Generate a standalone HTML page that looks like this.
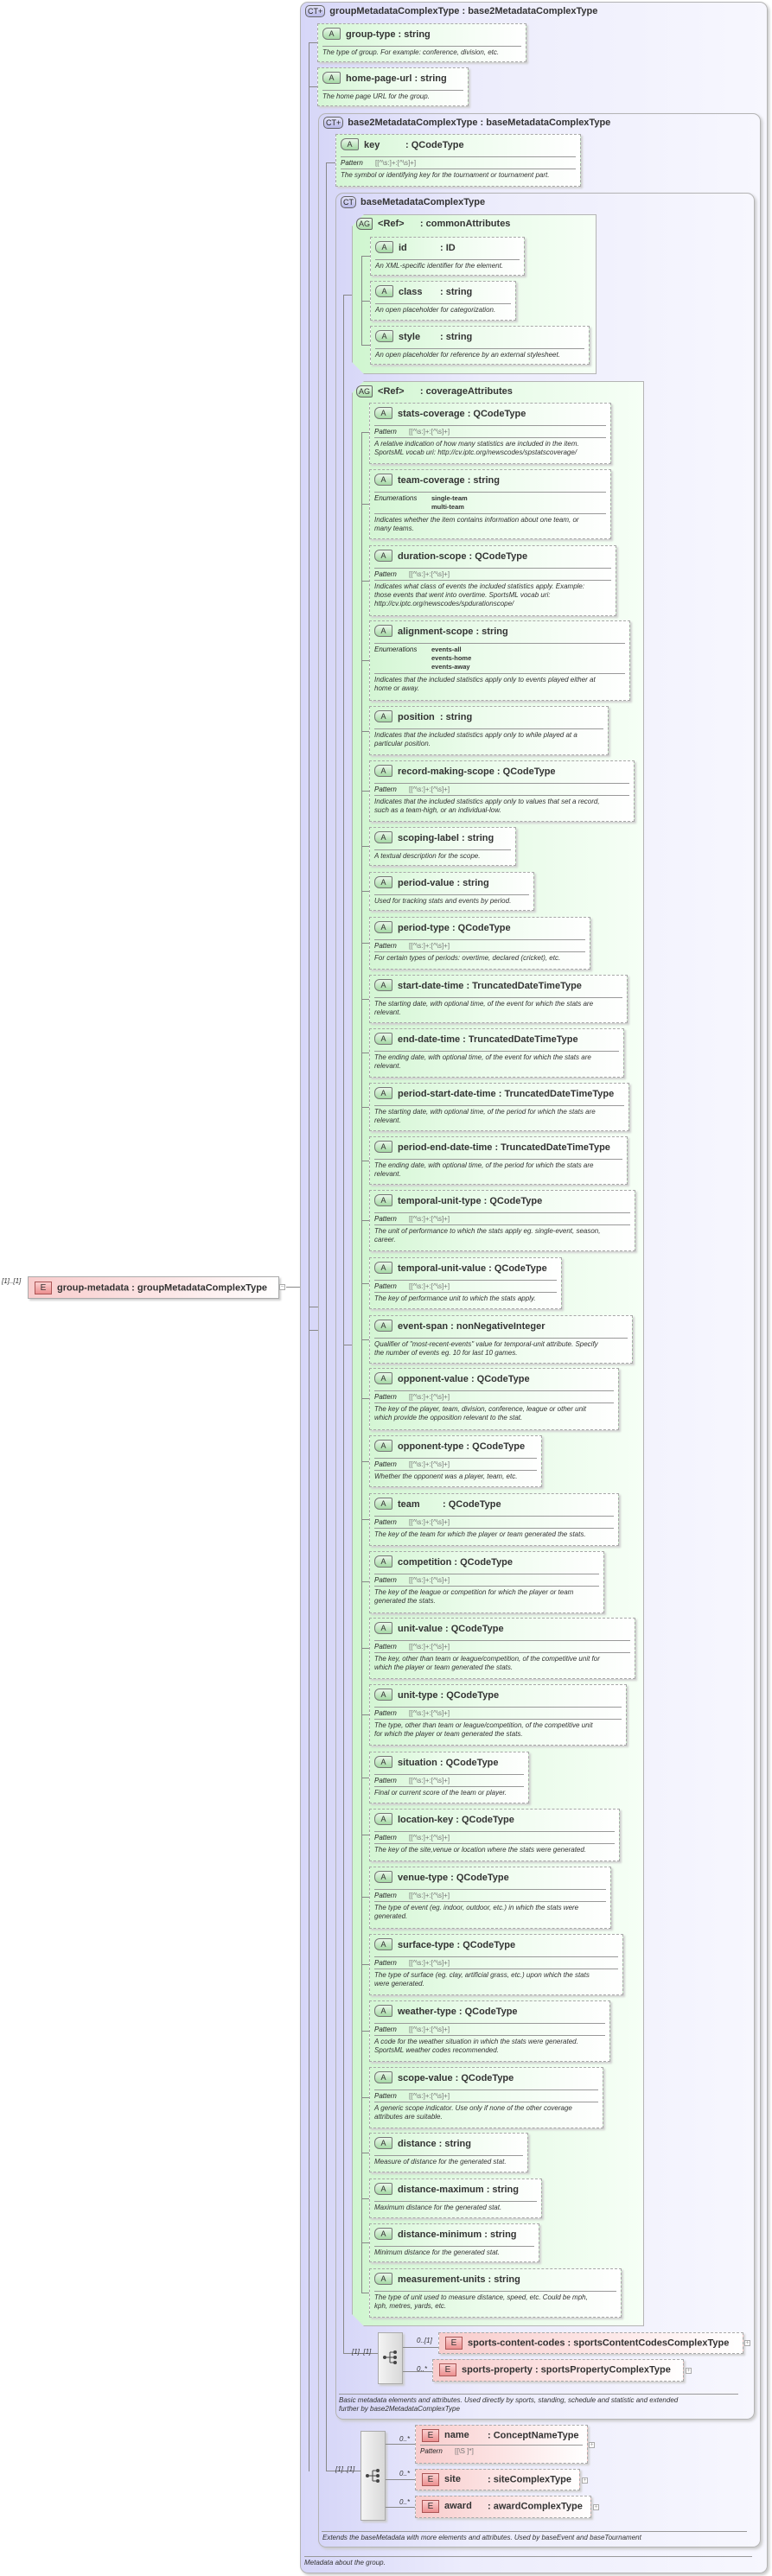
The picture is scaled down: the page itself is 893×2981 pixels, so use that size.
<!DOCTYPE html>
<html><head><meta charset="utf-8">
<style>
*{box-sizing:border-box;margin:0;padding:0}
body{width:893px;height:2981px;background:#fff;position:relative;font-family:"Liberation Sans",sans-serif;color:#333;overflow:hidden}
.ct{position:absolute;border:1px solid #b4b4b4;border-radius:9px;background:linear-gradient(to right,#d6d6f8 0,#ececfc 35%,#f7f7fe 100%);box-shadow:2px 2px 3px #c8c8c8}
.ctt{position:absolute;font-size:11px;font-weight:bold;white-space:nowrap;color:#333}
.cti{display:inline-block;vertical-align:middle;border:1px solid #666;border-radius:5px;background:linear-gradient(#e4e4fa,#b8b8e8);font-size:9px;font-weight:normal;padding:0 2px;height:14px;line-height:12px;margin-right:5px;color:#222}
.ag{position:absolute;border:1px solid #b4b4b4;background:linear-gradient(to right,#cff5cf 0,#e8fbe8 50%,#f6fff6 100%);box-shadow:2px 2px 3px #c4c4c4;clip-path:polygon(14px 0,100% 0,100% 100%,14px 100%,0 calc(100% - 14px),0 14px)}
.agi{display:inline-block;vertical-align:middle;border:1px solid #666;border-radius:6px 2px 2px 6px;background:linear-gradient(#e8f8e8,#a8dca8);font-size:9px;padding:0 2px;height:14px;line-height:12px;margin-right:6px;font-weight:normal}
.a{position:absolute;border:1px dashed #a8a8a8;background:linear-gradient(to right,#d4f6d4 0,#ecfcec 45%,#fff 100%);box-shadow:2px 2px 2px #d0d0d0}
.h{height:25px;padding:6px 0 0 5px;font-size:11px;font-weight:bold;white-space:nowrap}
.ai{display:inline-block;vertical-align:middle;width:21px;height:14px;border:1px solid #777;border-radius:6px 2px 2px 6px;background:linear-gradient(#eaf8ea,#a4d8a4);font-size:9px;font-weight:normal;text-align:center;line-height:12px;margin-right:6px;margin-top:-2px}
.s{border-top:1px solid #999;margin:0 5px}
.p{height:13px;font-size:8px;padding:2px 0 0 5px;white-space:nowrap}
.p i{display:inline-block;width:40px;color:#222}
.p b{font-weight:normal;color:#777}
.en{font-size:8px;padding:2px 0 2px 5px;display:flex}
.en i{width:66px;color:#222}
.en div{font-weight:bold;line-height:10px;font-size:7.5px}
.d{font-size:8px;font-style:italic;line-height:10px;padding:2px 5px;white-space:nowrap;color:#333}
.e{position:absolute;border:1px dashed #aaa;background:linear-gradient(to right,#f8cccc 0,#fce4e4 50%,#fff 100%);box-shadow:2px 2px 2px #d0d0d0}
.e.sol{border-style:solid}
.ei{display:inline-block;vertical-align:middle;width:20px;height:15px;border:1px solid #a55;background:linear-gradient(#fbd0d0,#ec9090);font-size:10px;text-align:center;line-height:13px;margin-right:6px;font-weight:normal}
.eh{padding:5px 0 0 7px;font-size:11px;font-weight:bold;white-space:nowrap}
.lb{position:absolute;font-size:8px;font-style:italic;white-space:nowrap}
.pl{position:absolute;width:7px;height:7px;border:1px solid #aaa;background:#fff;font-size:7px;line-height:5px;text-align:center;color:#999}
.ln{position:absolute;background:#888}
.sq{position:absolute;border:1px solid #aaa;background:linear-gradient(to right,#f4f4f4,#d8d8d8);box-shadow:2px 2px 2px #ccc}
.ds{position:absolute;font-size:8px;font-style:italic;line-height:10px;white-space:nowrap}
.dl{position:absolute;border-top:1px solid #999}
.w{display:inline-block}
</style></head><body>

<!-- root element -->
<div class="lb" style="left:2px;top:1478px">[1]..[1]</div>
<div class="e sol" style="left:32px;top:1477px;width:291px;height:26px"><div class="eh"><span class="ei">E</span>group-metadata : groupMetadataComplexType</div></div>
<div class="pl" style="left:323px;top:1486px">−</div>
<div class="ln" style="left:331px;top:1489px;width:26px;height:1px"></div>

<!-- outer CT -->
<div class="ct" style="left:347px;top:2px;width:541px;height:2976px"></div>
<div class="ctt" style="left:353px;top:6px"><span class="cti">CT+</span>groupMetadataComplexType : base2MetadataComplexType</div>

<div class="ln" style="left:357px;top:49px;width:1px;height:2811px"></div>
<div class="ln" style="left:357px;top:49px;width:10px;height:1px"></div>
<div class="ln" style="left:357px;top:100px;width:10px;height:1px"></div>
<div class="ln" style="left:357px;top:1512px;width:40px;height:1px"></div>
<div class="ln" style="left:357px;top:1539px;width:20px;height:1px"></div>

<div class="a" style="left:367px;top:27px;width:242px;height:45px"><div class="h"><span class="ai">A</span>group-type : string</div><div class="s"></div><div class="d">The type of group. For example: conference, division, etc.</div></div>
<div class="a" style="left:367px;top:78px;width:175px;height:45px"><div class="h"><span class="ai">A</span>home-page-url : string</div><div class="s"></div><div class="d">The home page URL for the group.</div></div>

<!-- base2 CT -->
<div class="ct" style="left:368px;top:131px;width:512px;height:2817px"></div>
<div class="ctt" style="left:374px;top:135px"><span class="cti">CT+</span>base2MetadataComplexType : baseMetadataComplexType</div>
<div class="ln" style="left:377px;top:188px;width:1px;height:2672px"></div>
<div class="ln" style="left:377px;top:188px;width:11px;height:1px"></div>
<div class="ln" style="left:377px;top:2859px;width:40px;height:1px"></div>

<div class="a" style="left:388px;top:155px;width:284px;height:61px"><div class="h"><span class="ai">A</span><span class="w" style="width:48px">key</span>: QCodeType</div><div class="s"></div><div class="p"><i>Pattern</i><b>[[^\s:]+:[^\s]+]</b></div><div class="s"></div><div class="d">The symbol or identifying key for the tournament or tournament part.</div></div>

<!-- base CT -->
<div class="ct" style="left:388px;top:223px;width:485px;height:2577px"></div>
<div class="ctt" style="left:394px;top:227px"><span class="cti">CT</span>baseMetadataComplexType</div>
<div class="ln" style="left:397px;top:341px;width:1px;height:2383px"></div>
<div class="ln" style="left:397px;top:341px;width:11px;height:1px"></div>
<div class="ln" style="left:397px;top:1556px;width:10px;height:1px"></div>
<div class="ln" style="left:397px;top:2723px;width:40px;height:1px"></div>

<!-- commonAttributes -->
<div class="ag" style="left:407px;top:248px;width:283px;height:185px"></div>
<div class="ctt" style="left:412px;top:252px"><span class="agi">AG</span>&lt;Ref&gt;&nbsp;&nbsp;&nbsp;&nbsp;&nbsp; : commonAttributes</div>
<div class="ln" style="left:418px;top:296px;width:1px;height:104px"></div>
<div class="ln" style="left:418px;top:296px;width:10px;height:1px"></div>
<div class="ln" style="left:418px;top:348px;width:10px;height:1px"></div>
<div class="ln" style="left:418px;top:399px;width:10px;height:1px"></div>
<div class="a" style="left:428px;top:274px;width:179px;height:45px"><div class="h"><span class="ai">A</span><span class="w" style="width:48px">id</span>: ID</div><div class="s"></div><div class="d">An XML-specific identifier for the element.</div></div>
<div class="a" style="left:428px;top:325px;width:169px;height:46px"><div class="h"><span class="ai">A</span><span class="w" style="width:48px">class</span>: string</div><div class="s"></div><div class="d">An open placeholder for categorization.</div></div>
<div class="a" style="left:428px;top:377px;width:254px;height:45px"><div class="h"><span class="ai">A</span><span class="w" style="width:48px">style</span>: string</div><div class="s"></div><div class="d">An open placeholder for reference by an external stylesheet.</div></div>

<!-- coverageAttributes -->
<div class="ag" style="left:407px;top:441px;width:338px;height:2251px"></div>
<div class="ctt" style="left:412px;top:446px"><span class="agi">AG</span>&lt;Ref&gt;&nbsp;&nbsp;&nbsp;&nbsp;&nbsp; : coverageAttributes</div>
<div class="ln" style="left:418px;top:500px;width:1px;height:2154px"></div>

<div class="a" style="left:427px;top:466px;width:280px;height:71px"><div class="h"><span class="ai">A</span>stats-coverage : QCodeType</div><div class="s"></div><div class="p"><i>Pattern</i><b>[[^\s:]+:[^\s]+]</b></div><div class="s"></div><div class="d">A relative indication of how many statistics are included in the item.<br>SportsML vocab uri: http://cv.iptc.org/newscodes/spstatscoverage/</div></div>
<div class="a" style="left:427px;top:543px;width:280px;height:81px"><div class="h"><span class="ai">A</span>team-coverage : string</div><div class="s"></div><div class="en"><i>Enumerations</i><div>single-team<br>multi-team</div></div><div class="s"></div><div class="d">Indicates whether the item contains information about one team, or<br>many teams.</div></div>
<div class="a" style="left:427px;top:631px;width:286px;height:82px"><div class="h"><span class="ai">A</span>duration-scope : QCodeType</div><div class="s"></div><div class="p"><i>Pattern</i><b>[[^\s:]+:[^\s]+]</b></div><div class="s"></div><div class="d">Indicates what class of events the included statistics apply. Example:<br>those events that went into overtime. SportsML vocab uri:<br>http://cv.iptc.org/newscodes/spdurationscope/</div></div>
<div class="a" style="left:427px;top:718px;width:302px;height:93px"><div class="h"><span class="ai">A</span>alignment-scope : string</div><div class="s"></div><div class="en"><i>Enumerations</i><div>events-all<br>events-home<br>events-away</div></div><div class="s"></div><div class="d">Indicates that the included statistics apply only to events played either at<br>home or away.</div></div>
<div class="a" style="left:427px;top:817px;width:277px;height:57px"><div class="h"><span class="ai">A</span>position&nbsp; : string</div><div class="s"></div><div class="d">Indicates that the included statistics apply only to while played at a<br>particular position.</div></div>
<div class="a" style="left:427px;top:880px;width:307px;height:71px"><div class="h"><span class="ai">A</span>record-making-scope : QCodeType</div><div class="s"></div><div class="p"><i>Pattern</i><b>[[^\s:]+:[^\s]+]</b></div><div class="s"></div><div class="d">Indicates that the included statistics apply only to values that set a record,<br>such as a team-high, or an individual-low.</div></div>
<div class="a" style="left:427px;top:957px;width:170px;height:45px"><div class="h"><span class="ai">A</span>scoping-label : string</div><div class="s"></div><div class="d">A textual description for the scope.</div></div>
<div class="a" style="left:427px;top:1009px;width:191px;height:45px"><div class="h"><span class="ai">A</span>period-value : string</div><div class="s"></div><div class="d">Used for tracking stats and events by period.</div></div>
<div class="a" style="left:427px;top:1061px;width:256px;height:61px"><div class="h"><span class="ai">A</span>period-type : QCodeType</div><div class="s"></div><div class="p"><i>Pattern</i><b>[[^\s:]+:[^\s]+]</b></div><div class="s"></div><div class="d">For certain types of periods: overtime, declared (cricket), etc.</div></div>
<div class="a" style="left:427px;top:1128px;width:299px;height:56px"><div class="h"><span class="ai">A</span>start-date-time : TruncatedDateTimeType</div><div class="s"></div><div class="d">The starting date, with optional time, of the event for which the stats are<br>relevant.</div></div>
<div class="a" style="left:427px;top:1190px;width:295px;height:57px"><div class="h"><span class="ai">A</span>end-date-time : TruncatedDateTimeType</div><div class="s"></div><div class="d">The ending date, with optional time, of the event for which the stats are<br>relevant.</div></div>
<div class="a" style="left:427px;top:1253px;width:301px;height:56px"><div class="h"><span class="ai">A</span>period-start-date-time : TruncatedDateTimeType</div><div class="s"></div><div class="d">The starting date, with optional time, of the period for which the stats are<br>relevant.</div></div>
<div class="a" style="left:427px;top:1315px;width:299px;height:56px"><div class="h"><span class="ai">A</span>period-end-date-time : TruncatedDateTimeType</div><div class="s"></div><div class="d">The ending date, with optional time, of the period for which the stats are<br>relevant.</div></div>
<div class="a" style="left:427px;top:1377px;width:308px;height:71px"><div class="h"><span class="ai">A</span>temporal-unit-type : QCodeType</div><div class="s"></div><div class="p"><i>Pattern</i><b>[[^\s:]+:[^\s]+]</b></div><div class="s"></div><div class="d">The unit of performance to which the stats apply eg. single-event, season,<br>career.</div></div>
<div class="a" style="left:427px;top:1455px;width:223px;height:60px"><div class="h"><span class="ai">A</span>temporal-unit-value : QCodeType</div><div class="s"></div><div class="p"><i>Pattern</i><b>[[^\s:]+:[^\s]+]</b></div><div class="s"></div><div class="d">The key of performance unit to which the stats apply.</div></div>
<div class="a" style="left:427px;top:1522px;width:305px;height:56px"><div class="h"><span class="ai">A</span>event-span : nonNegativeInteger</div><div class="s"></div><div class="d">Qualifier of "most-recent-events" value for temporal-unit attribute. Specify<br>the number of events eg. 10 for last 10 games.</div></div>
<div class="a" style="left:427px;top:1583px;width:289px;height:72px"><div class="h"><span class="ai">A</span>opponent-value : QCodeType</div><div class="s"></div><div class="p"><i>Pattern</i><b>[[^\s:]+:[^\s]+]</b></div><div class="s"></div><div class="d">The key of the player, team, division, conference, league or other unit<br>which provide the opposition relevant to the stat.</div></div>
<div class="a" style="left:427px;top:1661px;width:200px;height:60px"><div class="h"><span class="ai">A</span>opponent-type : QCodeType</div><div class="s"></div><div class="p"><i>Pattern</i><b>[[^\s:]+:[^\s]+]</b></div><div class="s"></div><div class="d">Whether the opponent was a player, team, etc.</div></div>
<div class="a" style="left:427px;top:1728px;width:289px;height:61px"><div class="h"><span class="ai">A</span><span class="w" style="width:52px">team</span>: QCodeType</div><div class="s"></div><div class="p"><i>Pattern</i><b>[[^\s:]+:[^\s]+]</b></div><div class="s"></div><div class="d">The key of the team for which the player or team generated the stats.</div></div>
<div class="a" style="left:427px;top:1795px;width:272px;height:72px"><div class="h"><span class="ai">A</span>competition : QCodeType</div><div class="s"></div><div class="p"><i>Pattern</i><b>[[^\s:]+:[^\s]+]</b></div><div class="s"></div><div class="d">The key of the league or competition for which the player or team<br>generated the stats.</div></div>
<div class="a" style="left:427px;top:1872px;width:308px;height:71px"><div class="h"><span class="ai">A</span>unit-value : QCodeType</div><div class="s"></div><div class="p"><i>Pattern</i><b>[[^\s:]+:[^\s]+]</b></div><div class="s"></div><div class="d">The key, other than team or league/competition, of the competitive unit for<br>which the player or team generated the stats.</div></div>
<div class="a" style="left:427px;top:1949px;width:298px;height:71px"><div class="h"><span class="ai">A</span>unit-type : QCodeType</div><div class="s"></div><div class="p"><i>Pattern</i><b>[[^\s:]+:[^\s]+]</b></div><div class="s"></div><div class="d">The type, other than team or league/competition, of the competitive unit<br>for which the player or team generated the stats.</div></div>
<div class="a" style="left:427px;top:2027px;width:185px;height:60px"><div class="h"><span class="ai">A</span>situation : QCodeType</div><div class="s"></div><div class="p"><i>Pattern</i><b>[[^\s:]+:[^\s]+]</b></div><div class="s"></div><div class="d">Final or current score of the team or player.</div></div>
<div class="a" style="left:427px;top:2093px;width:290px;height:61px"><div class="h"><span class="ai">A</span>location-key : QCodeType</div><div class="s"></div><div class="p"><i>Pattern</i><b>[[^\s:]+:[^\s]+]</b></div><div class="s"></div><div class="d">The key of the site,venue or location where the stats were generated.</div></div>
<div class="a" style="left:427px;top:2160px;width:280px;height:72px"><div class="h"><span class="ai">A</span>venue-type : QCodeType</div><div class="s"></div><div class="p"><i>Pattern</i><b>[[^\s:]+:[^\s]+]</b></div><div class="s"></div><div class="d">The type of event (eg. indoor, outdoor, etc.) in which the stats were<br>generated.</div></div>
<div class="a" style="left:427px;top:2238px;width:294px;height:71px"><div class="h"><span class="ai">A</span>surface-type : QCodeType</div><div class="s"></div><div class="p"><i>Pattern</i><b>[[^\s:]+:[^\s]+]</b></div><div class="s"></div><div class="d">The type of surface (eg. clay, artificial grass, etc.) upon which the stats<br>were generated.</div></div>
<div class="a" style="left:427px;top:2315px;width:279px;height:71px"><div class="h"><span class="ai">A</span>weather-type : QCodeType</div><div class="s"></div><div class="p"><i>Pattern</i><b>[[^\s:]+:[^\s]+]</b></div><div class="s"></div><div class="d">A code for the weather situation in which the stats were generated.<br>SportsML weather codes recommended.</div></div>
<div class="a" style="left:427px;top:2392px;width:271px;height:71px"><div class="h"><span class="ai">A</span>scope-value : QCodeType</div><div class="s"></div><div class="p"><i>Pattern</i><b>[[^\s:]+:[^\s]+]</b></div><div class="s"></div><div class="d">A generic scope indicator. Use only if none of the other coverage<br>attributes are suitable.</div></div>
<div class="a" style="left:427px;top:2468px;width:184px;height:46px"><div class="h"><span class="ai">A</span>distance : string</div><div class="s"></div><div class="d">Measure of distance for the generated stat.</div></div>
<div class="a" style="left:427px;top:2521px;width:200px;height:46px"><div class="h"><span class="ai">A</span>distance-maximum : string</div><div class="s"></div><div class="d">Maximum distance for the generated stat.</div></div>
<div class="a" style="left:427px;top:2573px;width:197px;height:45px"><div class="h"><span class="ai">A</span>distance-minimum : string</div><div class="s"></div><div class="d">Minimum distance for the generated stat.</div></div>
<div class="a" style="left:427px;top:2625px;width:292px;height:57px"><div class="h"><span class="ai">A</span>measurement-units : string</div><div class="s"></div><div class="d">The type of unit used to measure distance, speed, etc. Could be mph,<br>kph, metres, yards, etc.</div></div>

<!-- stubs -->
<div class="ln" style="left:418px;top:500px;width:9px;height:1px"></div>
<div class="ln" style="left:418px;top:583px;width:9px;height:1px"></div>
<div class="ln" style="left:418px;top:672px;width:9px;height:1px"></div>
<div class="ln" style="left:418px;top:764px;width:9px;height:1px"></div>
<div class="ln" style="left:418px;top:846px;width:9px;height:1px"></div>
<div class="ln" style="left:418px;top:915px;width:9px;height:1px"></div>
<div class="ln" style="left:418px;top:979px;width:9px;height:1px"></div>
<div class="ln" style="left:418px;top:1031px;width:9px;height:1px"></div>
<div class="ln" style="left:418px;top:1091px;width:9px;height:1px"></div>
<div class="ln" style="left:418px;top:1156px;width:9px;height:1px"></div>
<div class="ln" style="left:418px;top:1218px;width:9px;height:1px"></div>
<div class="ln" style="left:418px;top:1281px;width:9px;height:1px"></div>
<div class="ln" style="left:418px;top:1343px;width:9px;height:1px"></div>
<div class="ln" style="left:418px;top:1412px;width:9px;height:1px"></div>
<div class="ln" style="left:418px;top:1485px;width:9px;height:1px"></div>
<div class="ln" style="left:418px;top:1550px;width:9px;height:1px"></div>
<div class="ln" style="left:418px;top:1618px;width:9px;height:1px"></div>
<div class="ln" style="left:418px;top:1691px;width:9px;height:1px"></div>
<div class="ln" style="left:418px;top:1758px;width:9px;height:1px"></div>
<div class="ln" style="left:418px;top:1830px;width:9px;height:1px"></div>
<div class="ln" style="left:418px;top:1907px;width:9px;height:1px"></div>
<div class="ln" style="left:418px;top:1984px;width:9px;height:1px"></div>
<div class="ln" style="left:418px;top:2057px;width:9px;height:1px"></div>
<div class="ln" style="left:418px;top:2123px;width:9px;height:1px"></div>
<div class="ln" style="left:418px;top:2195px;width:9px;height:1px"></div>
<div class="ln" style="left:418px;top:2273px;width:9px;height:1px"></div>
<div class="ln" style="left:418px;top:2350px;width:9px;height:1px"></div>
<div class="ln" style="left:418px;top:2427px;width:9px;height:1px"></div>
<div class="ln" style="left:418px;top:2491px;width:9px;height:1px"></div>
<div class="ln" style="left:418px;top:2544px;width:9px;height:1px"></div>
<div class="ln" style="left:418px;top:2595px;width:9px;height:1px"></div>
<div class="ln" style="left:418px;top:2653px;width:9px;height:1px"></div>

<!-- sequence 1 -->
<div class="lb" style="left:407px;top:2717px">[1]..[1]</div>
<div class="sq" style="left:437px;top:2699px;width:29px;height:60px"></div>
<svg style="position:absolute;left:442px;top:2719px" width="20" height="18" viewBox="0 0 20 18"><circle cx="3" cy="9" r="2" fill="#444"/><path d="M5 9H9M9 3V15M9 3H13M9 9H13M9 15H13" stroke="#444" fill="none"/><circle cx="15" cy="3" r="2" fill="#444"/><circle cx="15" cy="9" r="2" fill="#444"/><circle cx="15" cy="15" r="2" fill="#444"/></svg>
<div class="ln" style="left:466px;top:2716px;width:41px;height:1px"></div>
<div class="ln" style="left:466px;top:2744px;width:34px;height:1px"></div>
<div class="lb" style="left:482px;top:2704px">0..[1]</div>
<div class="lb" style="left:482px;top:2737px">0..*</div>
<div class="e" style="left:507px;top:2699px;width:353px;height:25px"><div class="eh" style="padding-top:4px"><span class="ei">E</span>sports-content-codes : sportsContentCodesComplexType</div></div>
<div class="pl" style="left:861px;top:2708px">+</div>
<div class="e" style="left:500px;top:2730px;width:291px;height:26px"><div class="eh" style="padding-top:4px"><span class="ei">E</span>sports-property : sportsPropertyComplexType</div></div>
<div class="pl" style="left:793px;top:2740px">+</div>

<div class="dl" style="left:392px;top:2770px;width:462px"></div>
<div class="ds" style="left:392px;top:2773px">Basic metadata elements and attributes. Used directly by sports, standing, schedule and statistic and extended<br>further by base2MetadataComplexType</div>

<!-- sequence 2 -->
<div class="lb" style="left:388px;top:2853px">[1]..[1]</div>
<div class="sq" style="left:417px;top:2813px;width:29px;height:104px"></div>
<svg style="position:absolute;left:422px;top:2856px" width="20" height="18" viewBox="0 0 20 18"><circle cx="3" cy="9" r="2" fill="#444"/><path d="M5 9H9M9 3V15M9 3H13M9 9H13M9 15H13" stroke="#444" fill="none"/><circle cx="15" cy="3" r="2" fill="#444"/><circle cx="15" cy="9" r="2" fill="#444"/><circle cx="15" cy="15" r="2" fill="#444"/></svg>
<div class="ln" style="left:446px;top:2828px;width:34px;height:1px"></div>
<div class="ln" style="left:446px;top:2869px;width:34px;height:1px"></div>
<div class="ln" style="left:446px;top:2901px;width:34px;height:1px"></div>
<div class="lb" style="left:462px;top:2818px">0..*</div>
<div class="lb" style="left:462px;top:2858px">0..*</div>
<div class="lb" style="left:462px;top:2891px">0..*</div>
<div class="e" style="left:480px;top:2806px;width:200px;height:45px"><div class="eh" style="padding-top:4px"><span class="ei">E</span><span class="w" style="width:50px">name</span>: ConceptNameType</div><div class="s" style="margin-top:3px"></div><div class="p"><i>Pattern</i><b>[[\S ]*]</b></div></div>
<div class="pl" style="left:681px;top:2826px">+</div>
<div class="e" style="left:480px;top:2857px;width:191px;height:25px"><div class="eh" style="padding-top:4px"><span class="ei">E</span><span class="w" style="width:50px">site</span>: siteComplexType</div></div>
<div class="pl" style="left:673px;top:2867px">+</div>
<div class="e" style="left:480px;top:2888px;width:204px;height:26px"><div class="eh" style="padding-top:4px"><span class="ei">E</span><span class="w" style="width:50px">award</span>: awardComplexType</div></div>
<div class="pl" style="left:686px;top:2898px">+</div>

<div class="dl" style="left:372px;top:2929px;width:492px"></div>
<div class="ds" style="left:373px;top:2932px">Extends the baseMetadata with more elements and attributes. Used by baseEvent and baseTournament</div>

<div class="dl" style="left:352px;top:2958px;width:518px"></div>
<div class="ds" style="left:352px;top:2961px">Metadata about the group.</div>
</body></html>
